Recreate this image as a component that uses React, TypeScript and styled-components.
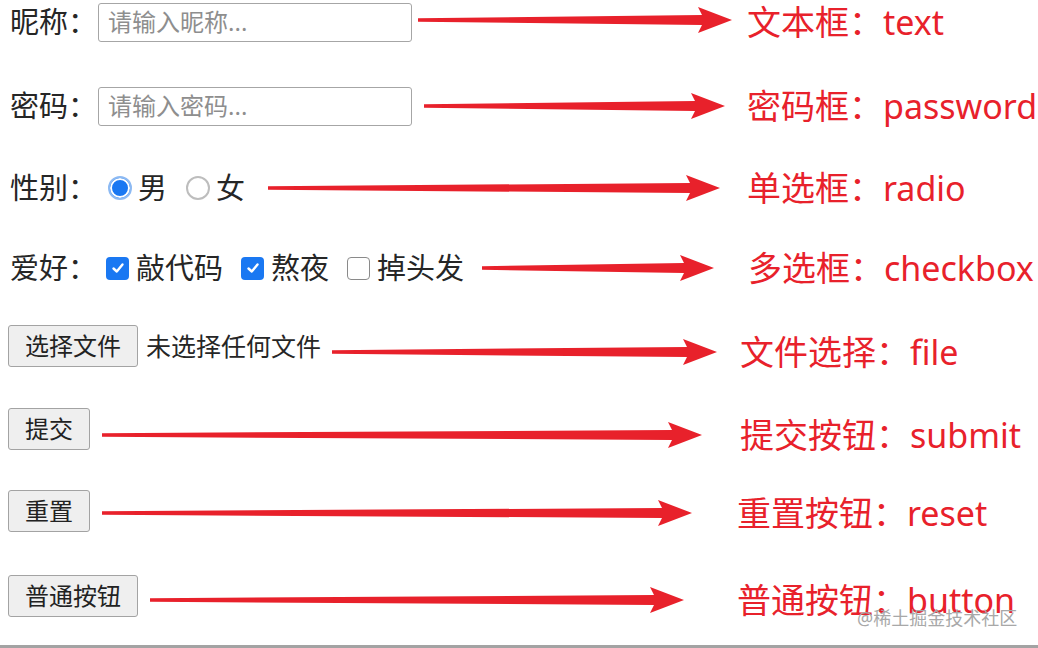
import { FC, ReactNode } from 'react';
import styled, { createGlobalStyle } from 'styled-components';

const RED = '#e8212b';
const BLUE = '#1a78f2';

const GlobalStyle = createGlobalStyle`
  html, body {
    margin: 0;
    padding: 0;
    background: #fff;
  }
  body {
    font-family: "Noto Sans", "Noto Sans CJK SC", sans-serif;
    color: #262626;
  }
`;

const Page = styled.div`
  position: relative;
  width: 1038px;
  height: 648px;
  box-sizing: border-box;
  border-bottom: 3px solid #a3a3a3;
  overflow: hidden;
  display: flex;
  flex-direction: column;
`;

const Row = styled.div<{ $start: number; $end: number; $gap: number }>`
  display: grid;
  grid-template-columns: ${({ $start }) => $start}px ${({ $start, $end }) => $end - $start}px 1fr;
  grid-template-rows: 44px;
  align-items: center;
  height: 44px;
  margin-top: ${({ $gap }) => $gap}px;
  flex-shrink: 0;
`;

// the form controls sit a few pixels above the arrow line in some rows
const Controls = styled.div<{ $lift: number }>`
  display: flex;
  align-items: center;
  padding-left: 8px;
  margin-top: ${({ $lift }) => -$lift}px;
  margin-bottom: ${({ $lift }) => $lift}px;
  white-space: nowrap;
`;

const ArrowCell = styled.div<{ $lift: number }>`
  display: flex;
  align-items: center;
  margin-top: ${({ $lift }) => -$lift}px;
  margin-bottom: ${({ $lift }) => $lift}px;
`;

const Caption = styled.div<{ $pad: number }>`
  padding-left: ${({ $pad }) => $pad}px;
  color: ${RED};
  font-size: 34px;
  line-height: 44px;
  white-space: nowrap;
`;

const FieldLabel = styled.span`
  margin-left: 2px;
  font-size: 29px;
  line-height: 40px;
  color: #262626;
`;

const TextBox = styled.div`
  width: 314px;
  height: 39px;
  box-sizing: border-box;
  margin-left: 1px;
  padding-left: 9px;
  border: 1.5px solid #a6a6a6;
  border-radius: 3px;
  font-size: 24px;
  line-height: 35px;
  color: #8e8e8e;
`;

const Radio = styled.span<{ $checked?: boolean; $first?: boolean }>`
  width: 24px;
  height: 24px;
  box-sizing: border-box;
  border-radius: 50%;
  margin-left: ${({ $first }) => ($first ? 11 : 19)}px;
  margin-right: 6px;
  border: 2px solid ${({ $checked }) => ($checked ? '#8dbaf3' : '#bdbdbd')};
  background: ${({ $checked }) => ($checked ? BLUE : '#fff')};
  box-shadow: ${({ $checked }) => ($checked ? 'inset 0 0 0 2px #fff' : 'none')};
`;

const Check = styled.span<{ $checked?: boolean; $first?: boolean }>`
  width: 23px;
  height: 23px;
  box-sizing: border-box;
  display: inline-flex;
  align-items: center;
  justify-content: center;
  border-radius: 4px;
  margin-left: ${({ $first }) => ($first ? 9 : 18)}px;
  margin-right: 7px;
  border: ${({ $checked }) => ($checked ? 'none' : '1.5px solid #8a8a8a')};
  background: ${({ $checked }) => ($checked ? BLUE : '#fff')};
`;

const OptionText = styled.span`
  font-size: 29px;
  line-height: 40px;
  color: #262626;
`;

const Button = styled.div`
  height: 42px;
  box-sizing: border-box;
  padding: 0 16px;
  border: 1px solid #a3a3a3;
  border-radius: 3px;
  background: #efefef;
  font-size: 24px;
  line-height: 40px;
  color: #222;
`;

const FileName = styled.span`
  margin-left: 8px;
  font-size: 25px;
  line-height: 40px;
  color: #262626;
`;

const Watermark = styled.div`
  position: absolute;
  left: 857px;
  top: 605px;
  font-size: 18px;
  line-height: 26px;
  color: #a8a8a8;
  white-space: nowrap;
`;

interface ArrowProps {
  width: number;
}

// tapered red arrow, thin at the tail and heavy at the head
const Arrow: FC<ArrowProps> = ({ width }) => {
  const h = 30;
  const c = h / 2;
  const points = [
    [0, c - 1.8],
    [width - 30, c - 5],
    [width - 34, 2],
    [width, c],
    [width - 34, h - 2],
    [width - 30, c + 5],
    [0, c + 1.8],
  ]
    .map((p) => p.join(','))
    .join(' ');
  return (
    <svg width={width} height={h} viewBox={`0 0 ${width} ${h}`}>
      <polygon points={points} fill={RED} />
    </svg>
  );
};

const CheckMark: FC = () => (
  <svg width='16' height='16' viewBox='0 0 16 16'>
    <polyline
      points='3.5,8.5 6.8,11.5 12.5,4.5'
      fill='none'
      stroke='#fff'
      strokeWidth='2.4'
      strokeLinecap='round'
      strokeLinejoin='round'
    />
  </svg>
);

interface RowDef {
  start: number;
  end: number;
  label: number;
  gap: number;
  lift?: number;
  arrowLift?: number;
  title: string;
  type: string;
  content: ReactNode;
}

const buildRows = (): RowDef[] => [
  {
    start: 418, end: 732, label: 747, gap: 0, arrowLift: 2,
    title: '文本框', type: 'text',
    content: (
      <>
        <FieldLabel>昵称：</FieldLabel>
        <TextBox>请输入昵称...</TextBox>
      </>
    ),
  },
  {
    start: 424, end: 725, label: 747, gap: 40,
    title: '密码框', type: 'password',
    content: (
      <>
        <FieldLabel>密码：</FieldLabel>
        <TextBox>请输入密码...</TextBox>
      </>
    ),
  },
  {
    start: 268, end: 720, label: 747, gap: 38,
    title: '单选框', type: 'radio',
    content: (
      <>
        <FieldLabel>性别：</FieldLabel>
        <Radio $checked $first />
        <OptionText>男</OptionText>
        <Radio />
        <OptionText>女</OptionText>
      </>
    ),
  },
  {
    start: 482, end: 714, label: 748, gap: 36,
    title: '多选框', type: 'checkbox',
    content: (
      <>
        <FieldLabel>爱好：</FieldLabel>
        <Check $checked $first><CheckMark /></Check>
        <OptionText>敲代码</OptionText>
        <Check $checked><CheckMark /></Check>
        <OptionText>熬夜</OptionText>
        <Check />
        <OptionText>掉头发</OptionText>
      </>
    ),
  },
  {
    start: 332, end: 717, label: 740, gap: 40, lift: 6,
    title: '文件选择', type: 'file',
    content: (
      <>
        <Button>选择文件</Button>
        <FileName>未选择任何文件</FileName>
      </>
    ),
  },
  {
    start: 102, end: 702, label: 740, gap: 39, lift: 6,
    title: '提交按钮', type: 'submit',
    content: <Button>提交</Button>,
  },
  {
    start: 102, end: 692, label: 737, gap: 34, lift: 2,
    title: '重置按钮', type: 'reset',
    content: <Button>重置</Button>,
  },
  {
    start: 150, end: 684, label: 737, gap: 43, lift: 4,
    title: '普通按钮', type: 'button',
    content: <Button>普通按钮</Button>,
  },
];

const App: FC = () => (
  <>
    <GlobalStyle />
    <Page>
      {buildRows().map((r) => (
        <Row key={r.type} $start={r.start} $end={r.end} $gap={r.gap}>
          <Controls $lift={r.lift ?? 0}>{r.content}</Controls>
          <ArrowCell $lift={r.arrowLift ?? 0}>
            <Arrow width={r.end - r.start} />
          </ArrowCell>
          <Caption $pad={r.label - r.end}>
            {r.title}：{r.type}
          </Caption>
        </Row>
      ))}
      <Watermark>@稀土掘金技术社区</Watermark>
    </Page>
  </>
);

export default App;
